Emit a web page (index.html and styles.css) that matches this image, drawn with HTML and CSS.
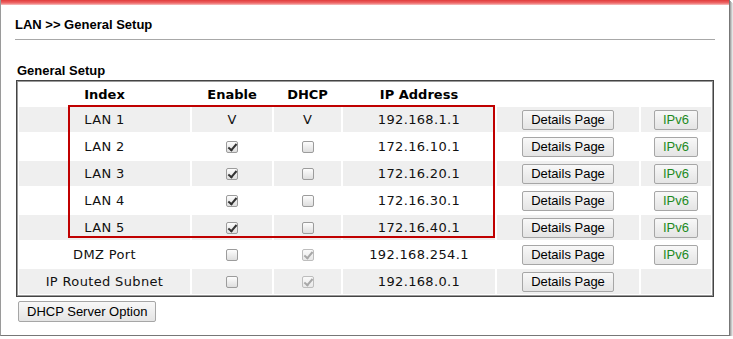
FILE: index.html
```html
<!DOCTYPE html>
<html lang="en">
<head>
    <meta charset="UTF-8">
    <title>LAN &gt;&gt; General Setup</title>
    <link rel="stylesheet" href="styles.css">
</head>
<body>
    <div class="frame">
        <div class="topbar"></div>
        <div class="page">
            <h1 class="title">LAN &gt;&gt; General Setup</h1>
            <h2 class="section">General Setup</h2>

            <div class="table-wrap">
                <table class="lan">
                    <thead>
                        <tr>
                            <th class="c-index">Index</th>
                            <th class="c-enable">Enable</th>
                            <th class="c-dhcp">DHCP</th>
                            <th class="c-ip">IP Address</th>
                            <th class="c-details"></th>
                            <th class="c-ipv6"></th>
                        </tr>
                    </thead>
                    <tbody>
                        <tr class="alt">
                            <td>LAN 1</td>
                            <td>V</td>
                            <td>V</td>
                            <td>192.168.1.1</td>
                            <td><button class="btn">Details Page</button></td>
                            <td><button class="btn btn-v6">IPv6</button></td>
                        </tr>
                        <tr>
                            <td>LAN 2</td>
                            <td><span class="cb checked"></span></td>
                            <td><span class="cb"></span></td>
                            <td>172.16.10.1</td>
                            <td><button class="btn">Details Page</button></td>
                            <td><button class="btn btn-v6">IPv6</button></td>
                        </tr>
                        <tr class="alt">
                            <td>LAN 3</td>
                            <td><span class="cb checked"></span></td>
                            <td><span class="cb"></span></td>
                            <td>172.16.20.1</td>
                            <td><button class="btn">Details Page</button></td>
                            <td><button class="btn btn-v6">IPv6</button></td>
                        </tr>
                        <tr>
                            <td>LAN 4</td>
                            <td><span class="cb checked"></span></td>
                            <td><span class="cb"></span></td>
                            <td>172.16.30.1</td>
                            <td><button class="btn">Details Page</button></td>
                            <td><button class="btn btn-v6">IPv6</button></td>
                        </tr>
                        <tr class="alt">
                            <td>LAN 5</td>
                            <td><span class="cb checked"></span></td>
                            <td><span class="cb"></span></td>
                            <td>172.16.40.1</td>
                            <td><button class="btn">Details Page</button></td>
                            <td><button class="btn btn-v6">IPv6</button></td>
                        </tr>
                        <tr>
                            <td>DMZ Port</td>
                            <td><span class="cb"></span></td>
                            <td><span class="cb checked disabled"></span></td>
                            <td>192.168.254.1</td>
                            <td><button class="btn">Details Page</button></td>
                            <td><button class="btn btn-v6">IPv6</button></td>
                        </tr>
                        <tr class="alt">
                            <td>IP Routed Subnet</td>
                            <td><span class="cb"></span></td>
                            <td><span class="cb checked disabled"></span></td>
                            <td>192.168.0.1</td>
                            <td><button class="btn">Details Page</button></td>
                            <td></td>
                        </tr>
                    </tbody>
                </table>
                <!-- marca vermelha sobre LAN 1..5 -->
                <div class="highlight"></div>
            </div>

            <button class="btn btn-option">DHCP Server Option</button>
        </div>
    </div>
</body>
</html>
```

FILE: styles.css
```css
body {
    margin: 0;
    background-color: white;
    font-family: "Liberation Sans", Arial, sans-serif;
}
.frame {
    width: 730px;
    height: 336px;
    box-sizing: border-box;
    border-left: 1px solid #9a9a9a;
    border-right: 1px solid #777;
    border-bottom: 1px solid #777;
    box-shadow: 1px 1px 0 #a8a8a8, 2px 2px 0 #c8c8c8, 3px 3px 0 #e4e4e4;
    background-color: white;
}
.topbar {
    height: 5px;
    background: linear-gradient(#e23b3b, #ee6a6a 60%, #f8c4c4);
}
.page {
    padding: 0;
}
.title {
    margin: 12px 0 0 14px;
    width: 700px;
    padding-bottom: 6px;
    border-bottom: 1px solid #a8a8a8;
    font-size: 13px;
    line-height: 16px;
    font-weight: bold;
    color: #000;
}
.section {
    margin: 23px 0 1px 16px;
    font-size: 13px;
    line-height: 16px;
    font-weight: bold;
    color: #000;
}
.table-wrap {
    position: relative;
    margin-left: 15px;
    width: 698px;
}
.lan {
    width: 698px;
    table-layout: fixed;
    border-collapse: separate;
    border-spacing: 2px;
    border: 1px solid #444;
    box-shadow: inset 1px 1px 0 #9a9a9a, inset -1px -1px 0 #9a9a9a;
    font-family: "DejaVu Sans", Verdana, sans-serif;
    font-size: 13px;
    color: #111;
}
.lan th {
    height: 22px;
    padding: 0;
    font-weight: bold;
    text-align: center;
    color: #000;
}
.lan td {
    height: 25px;
    padding: 0;
    text-align: center;
    vertical-align: middle;
    letter-spacing: 0.35px;
    background-color: white;
}
.lan tr.alt td {
    background-color: #efefef;
}
.c-index { width: 171px; }
.c-enable { width: 80px; }
.c-dhcp { width: 67px; }
.c-ip { width: 152px; }
.c-details { width: 142px; }
.c-ipv6 { width: 70px; }

.highlight {
    position: absolute;
    left: 52px;
    top: 25px;
    width: 427px;
    height: 133px;
    box-sizing: border-box;
    border: 2px solid #c00000;
    pointer-events: none;
}

.btn {
    font-family: "Liberation Sans", Arial, sans-serif;
    font-size: 13px;
    line-height: 18px;
    height: 20px;
    padding: 0 8px;
    margin: 0;
    border: 1px solid #a6a6a6;
    border-radius: 2px;
    background: linear-gradient(#f8f8f8, #e4e4e4);
    color: #000;
    letter-spacing: 0;
    vertical-align: middle;
    cursor: pointer;
}
.btn-v6 {
    color: #1e8a1e;
}
.btn-option {
    display: block;
    margin: 4px 0 0 17px;
    height: 21px;
    line-height: 19px;
}

.cb {
    display: block;
    position: relative;
    margin: 0 auto;
    width: 12px;
    height: 12px;
    box-sizing: border-box;
    border: 1px solid #9c9c9c;
    border-radius: 2px;
    background: linear-gradient(#fdfdfd, #dedede);
}
.cb.checked::after {
    content: "";
    position: absolute;
    left: 3px;
    top: 0px;
    width: 3px;
    height: 7px;
    border: solid #333;
    border-width: 0 2px 2px 0;
    transform: rotate(40deg);
}
.cb.disabled {
    border-color: #bdbdbd;
    background: linear-gradient(#fafafa, #e8e8e8);
}
.cb.disabled::after {
    border-color: #a8a8a8;
}
```
